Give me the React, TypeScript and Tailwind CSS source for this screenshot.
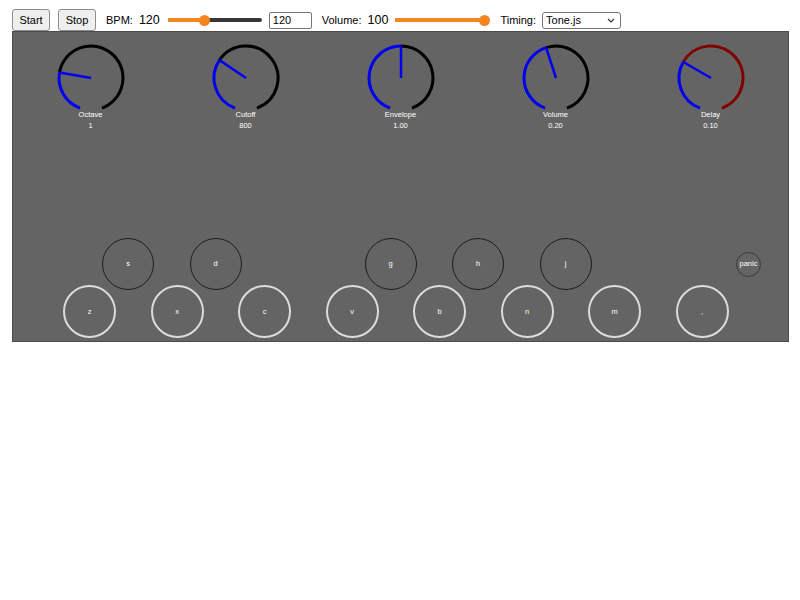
import React from "react";

const START = -160;
const END = 160;

const pt = (cx: number, cy: number, r: number, deg: number) => {
  const a = (deg * Math.PI) / 180;
  return [cx + r * Math.sin(a), cy - r * Math.cos(a)];
};

const arc = (cx: number, cy: number, r: number, a1: number, a2: number) => {
  const [x1, y1] = pt(cx, cy, r, a1);
  const [x2, y2] = pt(cx, cy, r, a2);
  const large = a2 - a1 > 180 ? 1 : 0;
  return `M ${x1} ${y1} A ${r} ${r} 0 ${large} 1 ${x2} ${y2}`;
};

type KnobProps = { label: string; value: string; angle: number; rest?: string };

const Knob = ({ label, value, angle, rest = "#000" }: KnobProps) => {
  const cx = 35;
  const cy = 35;
  const r = 32;
  const [px, py] = pt(cx, cy, r, angle);
  return (
    <div className="flex flex-col items-center">
      <svg width="70" height="66" viewBox="0 0 70 66" className="overflow-visible">
        <path d={arc(cx, cy, r, START, angle)} stroke="#0000f0" strokeWidth="3" fill="none" />
        <path d={arc(cx, cy, r, angle, END)} stroke={rest} strokeWidth="3" fill="none" />
        <line x1={cx} y1={cy} x2={px} y2={py} stroke="#0000f0" strokeWidth="2.5" />
      </svg>
      <div className="text-[7.5px] leading-[11px] text-white">{label}</div>
      <div className="text-[7.5px] leading-[11px] text-white">{value}</div>
    </div>
  );
};

const Slider = ({ frac }: { frac: number }) => (
  <div className="relative w-[94px] h-[10px] flex items-center">
    <div className="w-full h-[4px] rounded-full bg-[#383838]" />
    <div
      className="absolute left-0 h-[4px] rounded-full bg-[#f5861f]"
      style={{ width: `${5 + frac * 84}px` }}
    />
    <div
      className="absolute w-[11px] h-[11px] rounded-full bg-[#f5861f]"
      style={{ left: `${frac * 84 - 0.5}px` }}
    />
  </div>
);

const BlackKey = ({ k }: { k: string }) => (
  <div className="w-[52px] h-[52px] rounded-full border-[1.5px] border-[#1e1e1e] flex items-center justify-center text-[7.5px] text-white">
    {k}
  </div>
);

const WhiteKey = ({ k }: { k: string }) => (
  <div className="w-[53px] h-[53px] rounded-full border-2 border-[#dcdcdc] flex items-center justify-center text-[7.5px] text-white">
    {k}
  </div>
);

const knobs = [
  { label: "Octave", value: "1", angle: -80 },
  { label: "Cutoff", value: "800", angle: -56 },
  { label: "Envelope", value: "1.00", angle: 0 },
  { label: "Volume", value: "0.20", angle: -18 },
  { label: "Delay", value: "0.10", angle: -60, rest: "#800000" },
];

const App = () => {
  return (
    <div className="min-h-screen bg-white font-['Liberation_Sans',Arial,sans-serif] text-black">
      {/* top controls */}
      <div className="flex items-center h-[31px] pt-[9px] pl-[12px]">
        <button className="w-[38px] h-[22px] text-[11px] bg-[#efefef] border border-[#8f8f8f] rounded-[3px]">
          Start
        </button>
        <button className="ml-[8px] w-[38px] h-[22px] text-[11px] bg-[#efefef] border border-[#8f8f8f] rounded-[3px]">
          Stop
        </button>
        <span className="ml-[10px] text-[11px]">BPM:</span>
        <span className="ml-[6px] text-[12.5px]">120</span>
        <div className="ml-[8px]">
          <Slider frac={0.38} />
        </div>
        <div className="ml-[7px] w-[43px] h-[17px] border border-[#767676] rounded-[2px] text-[11px] leading-[15px] pl-[3px]">
          120
        </div>
        <span className="ml-[10px] text-[11px]">Volume:</span>
        <span className="ml-[6px] text-[12.5px]">100</span>
        <div className="ml-[7px]">
          <Slider frac={1} />
        </div>
        <span className="ml-[11px] text-[11px]">Timing:</span>
        <div className="ml-[6px] w-[79px] h-[17px] border border-[#767676] rounded-[3px] text-[11px] leading-[15px] pl-[3px] flex items-center justify-between pr-[5px]">
          <span>Tone.js</span>
          <svg width="8" height="5" viewBox="0 0 8 5">
            <path d="M1 1 L4 4 L7 1" stroke="#333" strokeWidth="1.2" fill="none" />
          </svg>
        </div>
      </div>

      {/* synth panel */}
      <div className="ml-[12px] w-[777px] h-[311px] bg-[#646464] border border-[#4c4c4c] flex flex-col">
        <div className="grid grid-cols-5 pt-[11px]">
          {knobs.map((k) => (
            <Knob key={k.label} {...k} />
          ))}
        </div>

        <div className="mt-[107px] flex items-center gap-[35.5px] pl-[89px]">
          <BlackKey k="s" />
          <BlackKey k="d" />
          <div className="w-[52px]" />
          <BlackKey k="g" />
          <BlackKey k="h" />
          <BlackKey k="j" />
          <div className="ml-[109px] w-[25px] h-[25px] rounded-full border-[1.5px] border-[#3c3c3c] flex items-center justify-center text-[7.5px] text-white">
            panic
          </div>
        </div>

        <div className="mt-[-5px] flex items-center gap-[34.5px] pl-[50px]">
          {["z", "x", "c", "v", "b", "n", "m", ","].map((k) => (
            <WhiteKey key={k} k={k} />
          ))}
        </div>
      </div>
    </div>
  );
};

export default App;
